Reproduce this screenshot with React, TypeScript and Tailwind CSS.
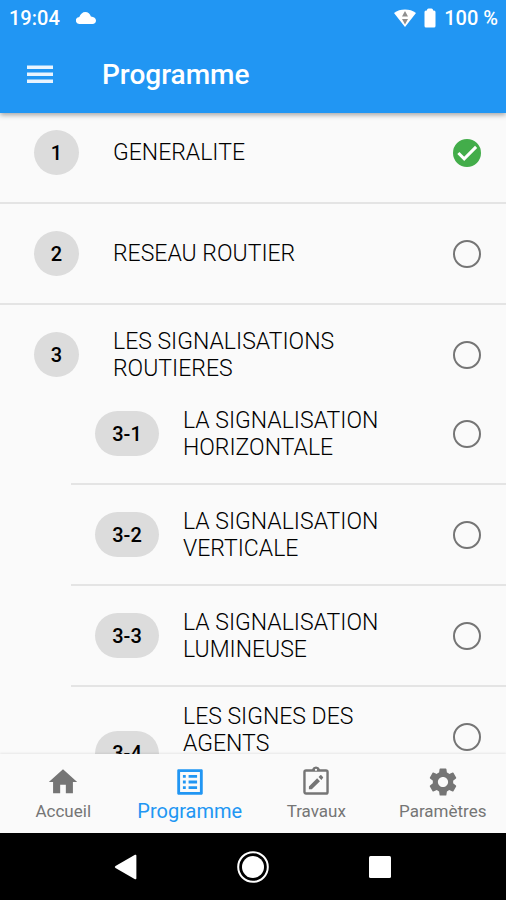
import React, { useState } from "react";
import { MdHome, MdListAlt, MdSettings } from "react-icons/md";

type Chapter = {
  id: string;
  title: string;
  done?: boolean;
  tall?: boolean;
  lessons?: Chapter[];
};

const chapters: Chapter[] = [
  { id: "1", title: "GENERALITE", done: true },
  { id: "2", title: "RESEAU ROUTIER" },
  {
    id: "3",
    title: "LES SIGNALISATIONS ROUTIERES",
    lessons: [
      { id: "3-1", title: "LA SIGNALISATION HORIZONTALE" },
      { id: "3-2", title: "LA SIGNALISATION VERTICALE" },
      { id: "3-3", title: "LA SIGNALISATION LUMINEUSE" },
      { id: "3-4", title: "LES SIGNES DES AGENTS", tall: true },
    ],
  },
];

const TravauxIcon: React.FC = () => (
  <svg viewBox="0 0 24 24" className="size-[34px]" fill="currentColor" aria-hidden="true">
    <path
      fillRule="evenodd"
      d="M19 3h-4.2a3 3 0 0 0-5.6 0H5a2 2 0 0 0-2 2v14c0 1.1.9 2 2 2h14a2 2 0 0 0 2-2V5a2 2 0 0 0-2-2zm0 16.3H5a.3.3 0 0 1-.3-.3V5c0-.2.1-.3.3-.3h14c.2 0 .3.1.3.3v14c0 .2-.1.3-.3.3zM12 2.6a.8.8 0 1 1 0 1.6.8.8 0 0 1 0-1.6z"
    />
    <path d="M7 15.2V17.200h2l5.8-5.8-2-2L7 15.200zM16.9 9.200a.6.6 0 0 0 0-.8l-1.100-1.100a.6.6 0 0 0-.8 0l-1.200 1.200 2 2 1.100-1.300z" />
  </svg>
);

const StatusBar: React.FC = () => (
  <div className="flex h-9 items-center justify-between px-2 text-xl">
    <div className="flex items-center gap-4 pl-px">
      <span>19:04</span>
      <svg viewBox="0 0 20 12" className="h-3 w-5" fill="currentColor" aria-hidden="true">
        <path d="M3.500 12A3.500 3.500 0 0 1 3.300 5C4.400 2 6.600 0 9.300 0c2.700 0 4.900 1.800 5.600 4.500C18 4.800 20 6.300 20 8.600c0 2-1.400 3.400-3.500 3.400z" />
      </svg>
    </div>
    <div className="flex items-center gap-2">
      <svg viewBox="0 0 22 18" className="h-[18px] w-[22px]" aria-hidden="true">
        <path d="M0 4C6-.6 16-.6 22 4L11 18z" fill="#fff" />
        <path d="M11 2l3 5.500H8zM11 15.500l-3-5.500h6z" fill="#8f8f8f" />
      </svg>
      <svg viewBox="0 0 12 20" className="h-5 w-3" fill="currentColor" aria-hidden="true">
        <path d="M3 2.500V2a1.500 1.500 0 0 1 1.500-1.500h3A1.500 1.500 0 0 1 9 2v.5h1A1.500 1.500 0 0 1 11.500 4v14a1.500 1.500 0 0 1-1.500 1.500H2A1.500 1.500 0 0 1 .5 18V4A1.500 1.500 0 0 1 2 2.500z" />
      </svg>
      <span>100 %</span>
    </div>
  </div>
);

const Header: React.FC = () => (
  <header className="relative z-10 shrink-0 bg-[#2196f3] font-medium text-white shadow-[0_2px_5px_rgba(0,0,0,0.35)]">
    <StatusBar />
    <div className="flex h-[77px] items-center gap-12 px-[26px]">
      <button type="button" aria-label="Menu">
        <svg viewBox="0 0 28 20" className="h-5 w-7" fill="#e9f4fe" aria-hidden="true">
          <path d="M1 .5h26v3.500H1zM1 7.500h26v3.500H1zM1 14.500h26v3.500H1z" />
        </svg>
      </button>
      <h1 className="text-[28px]">Programme</h1>
    </div>
  </header>
);

const DoneBox: React.FC<{ id: string; done?: boolean }> = ({ id, done }) => {
  const [checked, setChecked] = useState(!!done);
  return (
    <span className="relative block size-7">
      <input
        id={`done-${id}`}
        type="checkbox"
        checked={checked}
        onChange={() => setChecked(!checked)}
        className="peer block size-7 appearance-none rounded-full border-2 border-[#757575] checked:border-[#43ad4a] checked:bg-[#43ad4a]"
      />
      <svg
        viewBox="0 0 24 24"
        className="pointer-events-none absolute inset-0 hidden size-7 peer-checked:block"
        fill="none"
        stroke="#fff"
        strokeWidth="2.600"
        aria-hidden="true"
      >
        <path d="M4.600 12l5 5L19.800 6.800" />
      </svg>
    </span>
  );
};

const Row: React.FC<{ item: Chapter; nested?: boolean }> = ({ item, nested }) => (
  <div
    className={`flex items-center pr-[25px] ${item.tall ? "h-[132px]" : "h-[99px]"} ${
      nested ? "gap-6 pl-6" : "gap-[34px] pl-[34px]"
    }`}
  >
    <span
      className={`flex h-[45px] shrink-0 items-center justify-center rounded-full bg-[#dcdcdc] text-xl font-medium ${
        nested ? "w-16" : "w-[45px]"
      }`}
    >
      {item.id}
    </span>
    <label
      htmlFor={`done-${item.id}`}
      className={`flex-1 pr-12 ${item.tall ? "self-start pt-4" : ""}`}
    >
      {item.title}
    </label>
    <div className={`shrink-0 ${item.tall ? "self-start pt-9" : ""}`}>
      <DoneBox id={item.id} done={item.done} />
    </div>
  </div>
);

const ChapterList: React.FC = () => (
  <main className="min-h-0 flex-1 overflow-hidden">
    {/* first row starts partly under the header */}
    <ul className="-mt-2.5 divide-y-2 divide-[#e4e4e4] text-[23px] font-light leading-[27px] text-black">
      {chapters.map((chapter) => (
        <li key={chapter.id}>
          <Row item={chapter} />
          {chapter.lessons && (
            <ul className="-mt-5 ml-[71px] divide-y-2 divide-[#e4e4e4]">
              {chapter.lessons.map((lesson) => (
                <li key={lesson.id}>
                  <Row item={lesson} nested />
                </li>
              ))}
            </ul>
          )}
        </li>
      ))}
    </ul>
  </main>
);

const tabs = [
  { label: "Accueil", icon: <MdHome className="size-[34px]" /> },
  { label: "Programme", icon: <MdListAlt className="size-[34px]" />, active: true },
  { label: "Travaux", icon: <TravauxIcon /> },
  { label: "Paramètres", icon: <MdSettings className="size-[34px]" /> },
];

const TabBar: React.FC = () => (
  <nav className="relative grid h-[79px] shrink-0 grid-cols-4 bg-[#fafafa] shadow-[0_-1px_2px_rgba(0,0,0,0.08)]">
    {tabs.map((tab) => (
      <button
        key={tab.label}
        type="button"
        className={`flex flex-col items-center pt-[11px] leading-[25px] ${
          tab.active ? "text-xl text-[#2196f3]" : "text-[17px] text-[#757575]"
        }`}
      >
        {tab.icon}
        <span>{tab.label}</span>
      </button>
    ))}
  </nav>
);

const SystemNav: React.FC = () => (
  <div className="flex h-[67px] shrink-0 items-center justify-center gap-[95px] bg-black text-white">
    <button type="button" aria-label="Back">
      <svg viewBox="0 0 32 32" className="size-8" fill="currentColor">
        <path d="M5.500 15L25 3.800a1 1 0 0 1 1.400.9v22.600a1 1 0 0 1-1.400.9L5.500 17a1.200 1.200 0 0 1 0-2z" />
      </svg>
    </button>
    <button type="button" aria-label="Home">
      <svg viewBox="0 0 32 32" className="size-8">
        <circle cx="16" cy="16" r="14.800" fill="none" stroke="currentColor" strokeWidth="2" />
        <circle cx="16" cy="16" r="11" fill="currentColor" />
      </svg>
    </button>
    <button type="button" aria-label="Recent apps">
      <svg viewBox="0 0 32 32" className="size-8" fill="currentColor">
        <rect x="5" y="5" width="22" height="22" rx="1.500" />
      </svg>
    </button>
  </div>
);

const App: React.FC = () => {
  return (
    <div className="flex h-screen flex-col bg-[#fafafa] font-['Roboto',sans-serif]">
      <Header />
      <ChapterList />
      <TabBar />
      <SystemNav />
    </div>
  );
};

export default App;
